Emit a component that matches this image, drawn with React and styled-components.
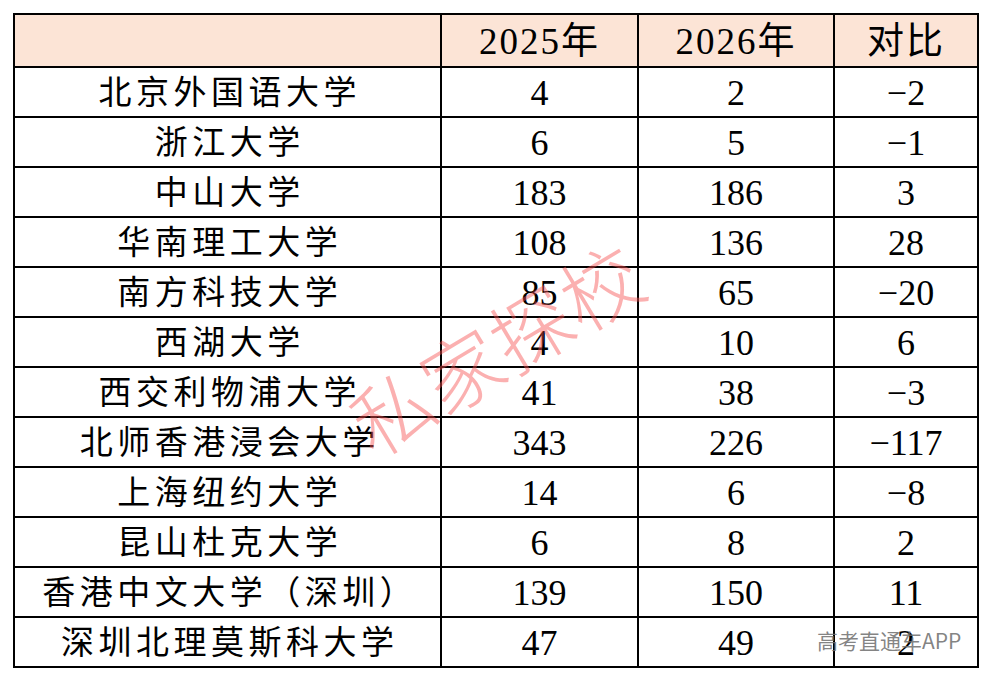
import React from 'react'
import styled, { createGlobalStyle } from 'styled-components'

const rows = [
  ['北京外国语大学', '4', '2', '−2'],
  ['浙江大学', '6', '5', '−1'],
  ['中山大学', '183', '186', '3'],
  ['华南理工大学', '108', '136', '28'],
  ['南方科技大学', '85', '65', '−20'],
  ['西湖大学', '4', '10', '6'],
  ['西交利物浦大学', '41', '38', '−3'],
  ['北师香港浸会大学', '343', '226', '−117'],
  ['上海纽约大学', '14', '6', '−8'],
  ['昆山杜克大学', '6', '8', '2'],
  ['香港中文大学（深圳）', '139', '150', '11'],
  ['深圳北理莫斯科大学', '47', '49', '2'],
]

const GlobalStyle = createGlobalStyle`
  body {
    margin: 0;
    background: #fff;
    font-family: "Liberation Serif", "Noto Sans CJK SC", serif;
  }
`

const Page = styled.div`
  position: relative;
  width: 994px;
  height: 682px;
  padding: 13px 0 0 13px;
  box-sizing: border-box;
  overflow: hidden;
`

const Grid = styled.div`
  display: grid;
  grid-template-columns: 425px 195px 194px 142px;
  grid-template-rows: 51px repeat(12, 48px);
  gap: 2px;
  padding: 2px;
  width: max-content;
  background: #000;
`

const Cell = styled.div`
  display: flex;
  align-items: center;
  justify-content: center;
  background: ${(p) => (p.$head ? '#fce4d6' : '#fff')};
  color: #000;
  font-size: ${(p) => (p.$head ? '37px' : '36px')};
  letter-spacing: ${(p) => (p.$head ? '2px' : '0')};
  line-height: 1;
  padding-top: 2px;
  white-space: nowrap;
`

const Name = styled.span`
  font-size: 33px;
  letter-spacing: 4.5px;
  margin-right: -4.5px;
`

const Stamp = styled.div`
  position: absolute;
  left: 333px;
  top: 298px;
  transform: rotate(-31deg);
  font-family: "Noto Sans CJK SC", sans-serif;
  font-size: 80px;
  line-height: 1.2;
  font-weight: 300;
  letter-spacing: 1px;
  color: rgba(246, 80, 80, 0.45);
  pointer-events: none;
`

const Brand = styled.div`
  position: absolute;
  left: 817px;
  top: 625px;
  font-family: "Noto Sans CJK SC", sans-serif;
  font-size: 21px;
  color: rgba(110, 110, 110, 0.85);
`

export default function App() {
  return (
    <Page>
      <GlobalStyle />
      <Grid>
        <Cell $head />
        <Cell $head>2025年</Cell>
        <Cell $head>2026年</Cell>
        <Cell $head>对比</Cell>
        {rows.map(([name, a, b, diff]) => (
          <React.Fragment key={name}>
            <Cell>
              <Name>{name}</Name>
            </Cell>
            <Cell>{a}</Cell>
            <Cell>{b}</Cell>
            <Cell>{diff}</Cell>
          </React.Fragment>
        ))}
      </Grid>
      <Stamp>私家探校</Stamp>
      <Brand>高考直通车APP</Brand>
    </Page>
  )
}
